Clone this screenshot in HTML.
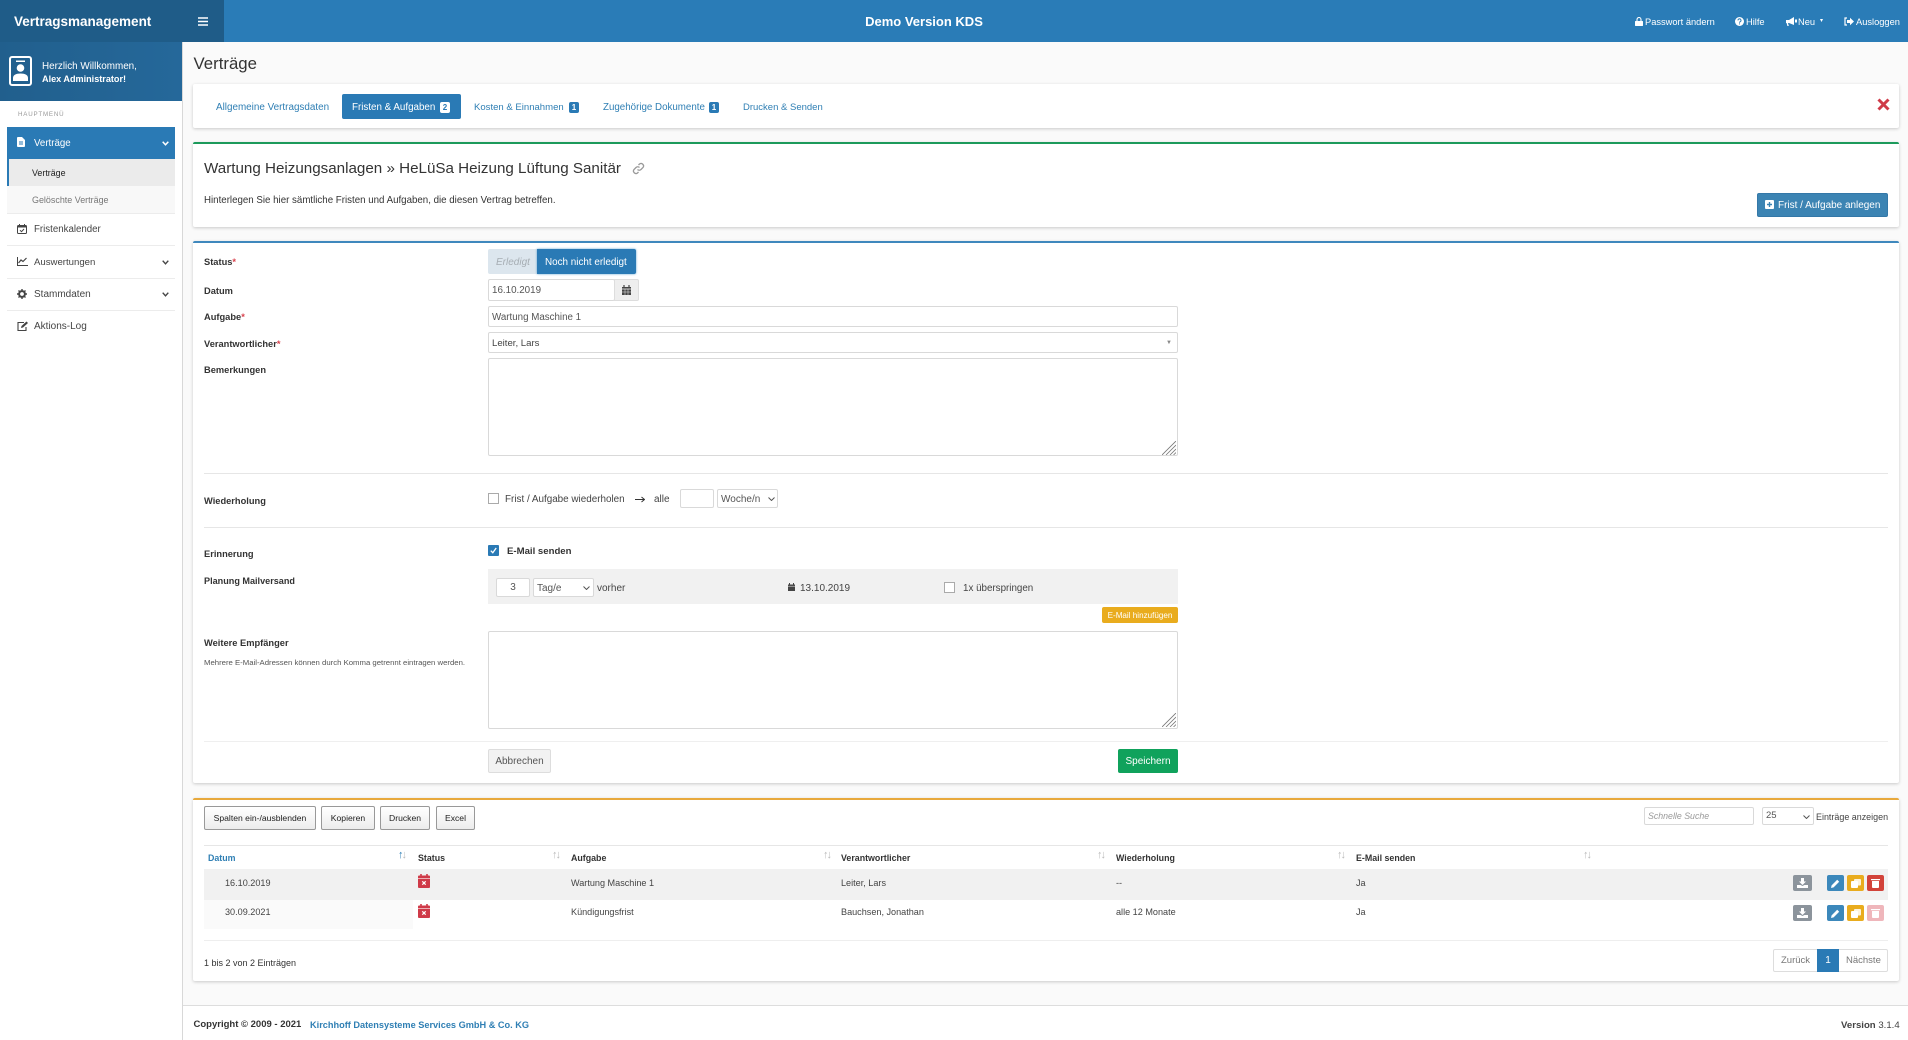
<!DOCTYPE html>
<html lang="de"><head><meta charset="utf-8"><title>Vertragsmanagement</title>
<style>
*{box-sizing:border-box}
html{background:#fafafa}
html,body{margin:0;padding:0;width:1908px;height:1040px;overflow:hidden;font-family:"Liberation Sans",sans-serif;color:#333}
body{background:#fafafa;filter:blur(.3px)}
.a{position:absolute}
.t{position:absolute;white-space:nowrap;line-height:16px;height:16px;font-size:10px;margin-top:1px}
.n{margin-top:0}
.b{font-weight:bold}
.card{position:absolute;left:193px;width:1706px;background:#fff;border-radius:2px;box-shadow:0 1px 3px rgba(0,0,0,.2)}
.lbl{left:204px;font-weight:bold;color:#333;font-size:9.3px;margin-top:0}
.req{color:#d9434e}
.inp{position:absolute;background:#fff;border:1px solid #d9d9d9;border-radius:2px}
.hr{position:absolute;left:204px;width:1684px;height:1px;background:#e6e6e6}
.mi{left:34px;font-size:9.8px;color:#444}
.sep{position:absolute;left:7px;width:168px;height:1px;background:#ececec}
.dtb{position:absolute;top:806px;height:24px;background:linear-gradient(#fff,#ececec);border:1px solid #999;border-radius:2px;font-size:8.6px;line-height:23px;text-align:center;color:#222}
.th{top:850px;font-weight:bold;font-size:8.85px;color:#333;margin-top:0}
.td{font-size:9.1px;color:#444;margin-top:0}
.ib{position:absolute;width:17px;height:16px;border-radius:2px}
.cb{position:absolute;width:11px;height:11px;background:#fff;border:1px solid #aaa}
svg{position:absolute;display:block}
.so{position:absolute;top:850px;font-size:11px;color:#bbb;line-height:10px;letter-spacing:-2px}
</style></head><body>

<!-- header -->
<div class="a" style="left:0;top:0;width:1908px;height:42px;background:#2a7cb7"></div>
<div class="a" style="left:0;top:0;width:224px;height:42px;background:#1f5c88"></div>
<div class="t b" style="left:14px;top:13px;font-size:13.5px;color:#fff">Vertragsmanagement</div>
<svg style="left:198px;top:17px" width="10" height="9" viewBox="0 0 10 9"><path d="M0 1h10M0 4.500h10M0 8h10" stroke="#fff" stroke-width="1.600"/></svg>
<div class="t b" style="left:824px;width:200px;text-align:center;top:13px;font-size:13px;color:#fff">Demo Version KDS</div>

<svg style="left:1635px;top:17px" width="8" height="9" viewBox="0 0 8 9"><path d="M2 4V2.500a2 2 0 0 1 4 0V4" fill="none" stroke="#fff" stroke-width="1.100"/><rect y="4" width="8" height="5" rx=".6" fill="#fff"/></svg>
<div class="t n" style="left:1645px;top:14px;font-size:9.300px;color:#fff">Passwort ändern</div>
<svg style="left:1735px;top:17px" width="9" height="9" viewBox="0 0 9 9"><circle cx="4.500" cy="4.500" r="4.500" fill="#fff"/><path d="M3 3.400a1.500 1.500 0 1 1 2.300 1.200c-.6.4-.8.6-.8 1.100" fill="none" stroke="#2a7cb7" stroke-width="1"/><rect x="4" y="6.400" width="1" height="1" fill="#2a7cb7"/></svg>
<div class="t n" style="left:1746px;top:14px;font-size:9.300px;color:#fff">Hilfe</div>
<svg style="left:1786px;top:17px" width="11" height="9" viewBox="0 0 11 9"><path d="M0 3h3l5-3v8L3 6H2l.8 3H1.400L.6 6H0z" fill="#fff"/><rect x="9" y="2.500" width="2" height="3" fill="#fff"/></svg>
<div class="t n" style="left:1798px;top:14px;font-size:9.300px;color:#fff">Neu</div>
<div class="t n" style="left:1820px;top:13px;font-size:6px;color:#fff">▾</div>
<svg style="left:1844px;top:17px" width="10" height="9" viewBox="0 0 10 9"><path d="M3 1H1v7h2" fill="none" stroke="#fff" stroke-width="1.200"/><path d="M3 3h3V.8L10 4.500 6 8.200V6H3z" fill="#fff"/></svg>
<div class="t n" style="left:1856px;top:14px;font-size:9.300px;color:#fff">Ausloggen</div>

<!-- sidebar -->
<div class="a" style="left:0;top:42px;width:183px;height:998px;background:#fff;border-right:1px solid #d8d8d8"></div>
<div class="a" style="left:0;top:42px;width:182px;height:59px;background:linear-gradient(90deg,#215f8d,#25689a)"></div>
<svg style="left:9px;top:56px" width="23" height="30" viewBox="0 0 23 30"><rect x="1" y="1" width="21" height="28" rx="2" fill="none" stroke="#fff" stroke-width="2"/><rect x="7" y="4.500" width="9" height="1.500" fill="#fff"/><circle cx="11.500" cy="12" r="3.800" fill="#fff"/><path d="M4 25v-3c0-3 3-4.500 7.500-4.500S19 19 19 22v3z" fill="#fff"/></svg>
<div class="t" style="left:42px;top:58px;font-size:9.900px;color:#fff">Herzlich Willkommen,</div>
<div class="t b" style="left:42px;top:70px;font-size:9.100px;color:#fff">Alex Administrator!</div>
<div class="t" style="left:18px;top:106px;font-size:6.200px;letter-spacing:.8px;color:#999">HAUPTMENÜ</div>

<div class="a" style="left:7px;top:127px;width:168px;height:32px;background:#2a7ab5"></div>
<svg style="left:17px;top:137px" width="8" height="10" viewBox="0 0 8 10"><path d="M0 1a1 1 0 0 1 1-1h4l3 3v6a1 1 0 0 1-1 1H1a1 1 0 0 1-1-1z" fill="#fff"/><path d="M2 5h4M2 7h4" stroke="#2a7ab5" stroke-width=".9"/></svg>
<div class="t mi" style="top:135px;color:#fff;font-size:9.700px">Verträge</div>
<svg style="left:162px;top:141px" width="7" height="5" viewBox="0 0 7 5"><path d="M.7.700 3.500 3.800 6.300.700" fill="none" stroke="#fff" stroke-width="1.500"/></svg>
<div class="a" style="left:7px;top:159px;width:168px;height:27px;background:#ebebeb;border-left:2px solid #2a7ab5"></div>
<div class="t" style="left:32px;top:164px;font-size:8.900px;color:#222">Verträge</div>
<div class="a" style="left:7px;top:186px;width:168px;height:27px;background:#f8f8f8"></div>
<div class="t" style="left:32px;top:191px;font-size:8.950px;color:#777">Gelöschte Verträge</div>
<div class="sep" style="top:213px"></div>
<svg style="left:17px;top:224px" width="10" height="10" viewBox="0 0 10 10"><rect x=".5" y="1.500" width="9" height="8" rx="1" fill="none" stroke="#444"/><rect x=".5" y="1.500" width="9" height="2" fill="#444"/><path d="M2.500 0v2M7.500 0v2" stroke="#444"/><path d="M3 6.200 4.500 7.700 7 5" fill="none" stroke="#444"/></svg>
<div class="t mi" style="top:221px;font-size:9.700px">Fristenkalender</div>
<div class="sep" style="top:245px"></div>
<svg style="left:17px;top:257px" width="11" height="9" viewBox="0 0 11 9"><path d="M.5 0v8.500H11" fill="none" stroke="#444"/><path d="M1.500 6 4 3l2 1.500L9.500 1" fill="none" stroke="#444" stroke-width="1.200"/></svg>
<div class="t mi" style="top:254px;font-size:9.600px">Auswertungen</div>
<svg style="left:162px;top:260px" width="7" height="5" viewBox="0 0 7 5"><path d="M.7.700 3.500 3.800 6.300.700" fill="none" stroke="#444" stroke-width="1.400"/></svg>
<div class="sep" style="top:278px"></div>
<svg style="left:17px;top:289px" width="10" height="10" viewBox="0 0 10 10"><circle cx="5" cy="5" r="2.900" fill="none" stroke="#444" stroke-width="2"/><path d="M5 0v10M0 5h10M1.500 1.500l7 7M8.500 1.500l-7 7" stroke="#444" stroke-width="1.400" stroke-dasharray="1.600 6.800"/></svg>
<div class="t mi" style="top:286px;font-size:10px">Stammdaten</div>
<svg style="left:162px;top:292px" width="7" height="5" viewBox="0 0 7 5"><path d="M.7.700 3.500 3.800 6.300.700" fill="none" stroke="#444" stroke-width="1.400"/></svg>
<div class="sep" style="top:310px"></div>
<svg style="left:17px;top:321px" width="12" height="10" viewBox="0 0 12 10"><path d="M7 1.500H1v8h8V6" fill="none" stroke="#444" stroke-width="1.100"/><path d="M4 7l.5-2L9.500.5l1.500 1.500L6 6.500z" fill="#444"/></svg>
<div class="t mi" style="top:318px;font-size:10px">Aktions-Log</div>

<!-- main title -->
<div class="t" style="left:193.500px;top:55px;font-size:16.800px;color:#333">Verträge</div>

<!-- tabs -->
<div class="card" style="top:84px;height:44px"></div>
<div class="t" style="left:216px;top:99px;font-size:9.900px;color:#2f7fb4">Allgemeine Vertragsdaten</div>
<div class="a" style="left:342px;top:94px;width:119px;height:25px;background:#2a7ab5;border-radius:2px"></div>
<div class="t" style="left:352px;top:99px;font-size:9.800px;color:#fff">Fristen &amp; Aufgaben</div>
<div class="a" style="left:440px;top:102px;width:10px;height:11px;background:#fff;border-radius:2px;color:#2a7ab5;font-size:8px;line-height:11px;text-align:center;font-weight:bold">2</div>
<div class="t" style="left:474px;top:99px;font-size:9.550px;color:#2f7fb4">Kosten &amp; Einnahmen</div>
<div class="a" style="left:569px;top:102px;width:10px;height:11px;background:#2a7ab5;border-radius:2px;color:#fff;font-size:8px;line-height:11px;text-align:center;font-weight:bold">1</div>
<div class="t" style="left:603px;top:99px;font-size:9.750px;color:#2f7fb4">Zugehörige Dokumente</div>
<div class="a" style="left:709px;top:102px;width:10px;height:11px;background:#2a7ab5;border-radius:2px;color:#fff;font-size:8px;line-height:11px;text-align:center;font-weight:bold">1</div>
<div class="t" style="left:743px;top:99px;font-size:9.500px;color:#2f7fb4">Drucken &amp; Senden</div>
<svg style="left:1877px;top:98px" width="13" height="13" viewBox="0 0 13 13"><path d="M1.500 1.500l10 10M11.500 1.500l-10 10" stroke="#cf3a48" stroke-width="3"/></svg>

<!-- title card -->
<div class="card" style="top:142px;height:85px;border-top:2px solid #1c9a5b"></div>
<div class="t" style="left:204px;top:160px;font-size:15.180px;color:#333">Wartung Heizungsanlagen » HeLüSa Heizung Lüftung Sanitär</div>
<svg style="left:632px;top:162px" width="13" height="13" viewBox="0 0 13 13"><path d="M5.500 7.500a2.500 2.500 0 0 0 3.500 0l2-2a2.500 2.500 0 0 0-3.500-3.500L6.500 3M7.500 5.500a2.500 2.500 0 0 0-3.500 0l-2 2a2.500 2.500 0 0 0 3.500 3.500L6.500 10" fill="none" stroke="#999" stroke-width="1.300"/></svg>
<div class="t" style="left:204px;top:192px;font-size:9.730px;color:#333">Hinterlegen Sie hier sämtliche Fristen und Aufgaben, die diesen Vertrag betreffen.</div>
<div class="a" style="left:1757px;top:193px;width:131px;height:24px;background:#3c84b3;border-radius:2px;border:1px solid #3478a8"></div>
<svg style="left:1765px;top:200px" width="9" height="9" viewBox="0 0 9 9"><rect width="9" height="9" rx="1" fill="#fff"/><path d="M4.500 2v5M2 4.500h5" stroke="#3c84b3" stroke-width="1.400"/></svg>
<div class="t" style="left:1778px;top:197px;font-size:9.960px;color:#fff">Frist / Aufgabe anlegen</div>

<!-- form card -->
<div class="card" style="top:241px;height:542px;border-top:2px solid #3f88bd"></div>
<div class="t lbl" style="top:254px">Status<span class="req">*</span></div>
<div class="a" style="left:488px;top:249px;width:49px;height:25px;background:#dce6ee;border-radius:2px 0 0 2px"></div>
<div class="t" style="left:496px;top:254px;font-style:italic;font-size:10px;color:#a6adb3">Erledigt</div>
<div class="a" style="left:537px;top:249px;width:99px;height:25px;background:#2a7ab5;border-radius:0 2px 2px 0;box-shadow:0 0 2px #5aa0d0"></div>
<div class="t" style="left:545px;top:254px;font-size:9.900px;color:#fff">Noch nicht erledigt</div>

<div class="t lbl" style="top:283px">Datum</div>
<div class="inp" style="left:488px;top:279px;width:127px;height:22px"></div>
<div class="t" style="left:492px;top:282px;font-size:9.800px;color:#555">16.10.2019</div>
<div class="a" style="left:614px;top:279px;width:25px;height:22px;background:#eee;border:1px solid #ddd;border-radius:0 2px 2px 0"></div>
<svg style="left:622px;top:285px" width="9" height="10" viewBox="0 0 9 10"><path d="M0 2h9v8H0z" fill="#444"/><path d="M2 0v2M7 0v2" stroke="#444" stroke-width="1.200"/><path d="M0 4h9" stroke="#eee" stroke-width=".8"/><path d="M3 4v6M6 4v6M0 7h9" stroke="#eee" stroke-width=".5"/></svg>

<div class="t lbl" style="top:309px">Aufgabe<span class="req">*</span></div>
<div class="inp" style="left:488px;top:306px;width:690px;height:21px"></div>
<div class="t" style="left:492px;top:309px;font-size:9.750px;color:#555">Wartung Maschine 1</div>

<div class="t lbl" style="top:336px">Verantwortlicher<span class="req">*</span></div>
<div class="inp" style="left:488px;top:332px;width:690px;height:21px"></div>
<div class="t" style="left:492px;top:335px;font-size:9.600px;color:#444">Leiter, Lars</div>
<div class="t" style="left:1166px;top:334px;font-size:6px;color:#888">▼</div>

<div class="t lbl" style="top:362px">Bemerkungen</div>
<div class="inp" style="left:488px;top:358px;width:690px;height:98px"></div>
<svg style="left:1162px;top:441px" width="14" height="14" viewBox="0 0 14 14"><path d="M14 0 0 14M14 4 4 14M14 8 8 14M14 11.500 11.500 14" stroke="#777" stroke-width=".8"/></svg>

<div class="hr" style="top:473px"></div>
<div class="t lbl" style="top:493px">Wiederholung</div>
<div class="cb" style="left:488px;top:493px"></div>
<div class="t" style="left:505px;top:491px;font-size:9.900px;color:#444">Frist / Aufgabe wiederholen</div>
<svg style="left:635px;top:496px" width="10" height="7" viewBox="0 0 10 7"><path d="M0 3.500h9M6.500 1 9.500 3.500 6.500 6" fill="none" stroke="#333" stroke-width="1"/></svg>
<div class="t" style="left:654px;top:491px;font-size:10px;color:#444">alle</div>
<div class="inp" style="left:680px;top:489px;width:34px;height:19px"></div>
<div class="inp" style="left:717px;top:489px;width:61px;height:19px"></div>
<div class="t" style="left:721px;top:491px;font-size:10px;color:#555">Woche/n</div>
<svg style="left:768px;top:497px" width="7" height="4" viewBox="0 0 7 4"><path d="M.5.500 3.500 3.500 6.500.500" fill="none" stroke="#555"/></svg>

<div class="hr" style="top:527px"></div>
<div class="t lbl" style="top:546px">Erinnerung</div>
<div class="a" style="left:488px;top:545px;width:11px;height:11px;background:#2a7ab5;border-radius:1px"></div>
<svg style="left:490px;top:547px" width="7" height="7" viewBox="0 0 7 7"><path d="M.8 3.700 2.800 5.700 6.200 1" fill="none" stroke="#fff" stroke-width="1.300"/></svg>
<div class="t b" style="left:507px;top:543px;font-size:9.600px;color:#333">E-Mail senden</div>

<div class="t lbl" style="top:573px;font-size:9.100px">Planung Mailversand</div>
<div class="a" style="left:488px;top:569px;width:690px;height:35px;background:#f1f1f1"></div>
<div class="inp" style="left:496px;top:578px;width:34px;height:19px;text-align:center;font-size:10px;line-height:18px;color:#555">3</div>
<div class="inp" style="left:533px;top:578px;width:61px;height:19px"></div>
<div class="t" style="left:537px;top:580px;font-size:10px;color:#555">Tag/e</div>
<svg style="left:583px;top:586px" width="7" height="4" viewBox="0 0 7 4"><path d="M.5.500 3.500 3.500 6.500.500" fill="none" stroke="#555"/></svg>
<div class="t" style="left:597px;top:580px;font-size:10px;color:#444">vorher</div>
<svg style="left:788px;top:583px" width="7" height="8" viewBox="0 0 7 8"><path d="M0 1.500h7V8H0z" fill="#444"/><path d="M1.500 0v1.500M5.500 0v1.500" stroke="#444"/><path d="M0 3.200h7" stroke="#f1f1f1" stroke-width=".5"/></svg>
<div class="t" style="left:800px;top:580px;font-size:10px;color:#444">13.10.2019</div>
<div class="cb" style="left:944px;top:582px"></div>
<div class="t" style="left:963px;top:580px;font-size:9.800px;color:#444">1x überspringen</div>
<div class="a" style="left:1102px;top:607px;width:76px;height:16px;background:#e9ac1e;border-radius:2px;color:#fff;font-size:8.100px;line-height:17px;text-align:center">E-Mail hinzufügen</div>

<div class="t lbl" style="top:635px">Weitere Empfänger</div>
<div class="t" style="left:204px;top:654px;font-size:7.750px;color:#555">Mehrere E-Mail-Adressen können durch Komma getrennt eintragen werden.</div>
<div class="inp" style="left:488px;top:631px;width:690px;height:98px"></div>
<svg style="left:1162px;top:713px" width="14" height="14" viewBox="0 0 14 14"><path d="M14 0 0 14M14 4 4 14M14 8 8 14M14 11.500 11.500 14" stroke="#777" stroke-width=".8"/></svg>

<div class="hr" style="top:741px;background:#efefef"></div>
<div class="a" style="left:488px;top:749px;width:63px;height:24px;background:#f2f2f2;border:1px solid #ddd;border-radius:2px;color:#555;font-size:10px;line-height:23px;text-align:center">Abbrechen</div>
<div class="a" style="left:1118px;top:749px;width:60px;height:24px;background:#10a25c;border-radius:2px;color:#fff;font-size:10px;line-height:25px;text-align:center">Speichern</div>

<!-- table card -->
<div class="card" style="top:798px;height:183px;border-top:2px solid #e8a93c"></div>
<div class="dtb" style="left:204px;width:112px">Spalten ein-/ausblenden</div>
<div class="dtb" style="left:321px;width:54px">Kopieren</div>
<div class="dtb" style="left:380px;width:50px">Drucken</div>
<div class="dtb" style="left:436px;width:39px">Excel</div>
<div class="inp" style="left:1644px;top:807px;width:110px;height:18px"></div>
<div class="t" style="left:1648px;top:807px;font-size:8.800px;font-style:italic;color:#999">Schnelle Suche</div>
<div class="inp" style="left:1762px;top:807px;width:52px;height:18px"></div>
<div class="t" style="left:1766px;top:807px;font-size:9.500px;color:#555">25</div>
<svg style="left:1803px;top:815px" width="7" height="4" viewBox="0 0 7 4"><path d="M.5.500 3.500 3.500 6.500.500" fill="none" stroke="#555"/></svg>
<div class="t" style="left:1816px;top:808px;font-size:8.950px;color:#444">Einträge anzeigen</div>

<div class="hr" style="top:845px"></div>
<div class="t th" style="left:208px;color:#2f7fb4">Datum</div>
<div class="t th" style="left:418px">Status</div>
<div class="t th" style="left:571px">Aufgabe</div>
<div class="t th" style="left:841px">Verantwortlicher</div>
<div class="t th" style="left:1116px">Wiederholung</div>
<div class="t th" style="left:1356px">E-Mail senden</div>
<div class="so" style="left:398px;color:#2f7fb4">↑<span style="color:#bbb">↓</span></div>
<div class="so" style="left:552px">↑↓</div>
<div class="so" style="left:823px">↑↓</div>
<div class="so" style="left:1097px">↑↓</div>
<div class="so" style="left:1337px">↑↓</div>
<div class="so" style="left:1583px">↑↓</div>

<div class="a" style="left:204px;top:869px;width:1684px;height:31px;background:#f1f1f1"></div>
<div class="a" style="left:204px;top:900px;width:209px;height:29px;background:#fafafa"></div>

<div class="t td" style="left:225px;top:875px">16.10.2019</div>
<div class="t td" style="left:571px;top:875px">Wartung Maschine 1</div>
<div class="t td" style="left:841px;top:875px">Leiter, Lars</div>
<div class="t td" style="left:1116px;top:875px">--</div>
<div class="t td" style="left:1356px;top:875px">Ja</div>

<div class="t td" style="left:225px;top:904px">30.09.2021</div>
<div class="t td" style="left:571px;top:904px">Kündigungsfrist</div>
<div class="t td" style="left:841px;top:904px">Bauchsen, Jonathan</div>
<div class="t td" style="left:1116px;top:904px">alle 12 Monate</div>
<div class="t td" style="left:1356px;top:904px">Ja</div>

<svg style="left:418px;top:874px" width="12" height="14" viewBox="0 0 12 14"><path d="M0 2.500a1 1 0 0 1 1-1h10a1 1 0 0 1 1 1V13a1 1 0 0 1-1 1H1a1 1 0 0 1-1-1z" fill="#cf3a48"/><path d="M3 0v2.500M9 0v2.500" stroke="#cf3a48" stroke-width="1.600"/><path d="M0 4.500h12" stroke="#fff" stroke-width=".6"/><path d="M4.300 7.300l3.400 3.400M7.700 7.300l-3.400 3.400" stroke="#fff" stroke-width="1.200"/></svg>
<svg style="left:418px;top:904px" width="12" height="14" viewBox="0 0 12 14"><path d="M0 2.500a1 1 0 0 1 1-1h10a1 1 0 0 1 1 1V13a1 1 0 0 1-1 1H1a1 1 0 0 1-1-1z" fill="#cf3a48"/><path d="M3 0v2.500M9 0v2.500" stroke="#cf3a48" stroke-width="1.600"/><path d="M0 4.500h12" stroke="#fff" stroke-width=".6"/><path d="M4.300 7.300l3.400 3.400M7.700 7.300l-3.400 3.400" stroke="#fff" stroke-width="1.200"/></svg>

<!-- row actions -->
<div class="ib" style="left:1793px;top:875px;width:19px;background:#8c949c"></div>
<svg style="left:1797px;top:878px" width="11" height="10" viewBox="0 0 11 10"><path d="M4 0h3v3.500h2L5.500 7 2 3.500h2z" fill="#fff"/><path d="M0 7h3.500l2 1 2-1H11v3H0z" fill="#fff"/></svg>
<div class="ib" style="left:1827px;top:875px;background:#3c88bb"></div>
<svg style="left:1831px;top:879px" width="9" height="9" viewBox="0 0 9 9"><path d="M0 9l.6-2.600L6.200.8l2 2L2.600 8.400z" fill="#fff"/></svg>
<div class="ib" style="left:1847px;top:875px;background:#e9ac1e"></div>
<svg style="left:1851px;top:879px" width="10" height="9" viewBox="0 0 10 9"><rect x="3" y="0" width="7" height="6.500" rx="1" fill="#fff" opacity=".85"/><rect x="0" y="2" width="7" height="7" rx="1" fill="#fff"/></svg>
<div class="ib" style="left:1867px;top:875px;background:#d2433a"></div>
<svg style="left:1871px;top:878px" width="9" height="10" viewBox="0 0 9 10"><path d="M0 1h9v1.200H0z" fill="#fff"/><path d="M1 3h7v6a1 1 0 0 1-1 1H2a1 1 0 0 1-1-1z" fill="#fff"/></svg>

<div class="ib" style="left:1793px;top:905px;width:19px;background:#8c949c"></div>
<svg style="left:1797px;top:908px" width="11" height="10" viewBox="0 0 11 10"><path d="M4 0h3v3.500h2L5.500 7 2 3.500h2z" fill="#fff"/><path d="M0 7h3.500l2 1 2-1H11v3H0z" fill="#fff"/></svg>
<div class="ib" style="left:1827px;top:905px;background:#3c88bb"></div>
<svg style="left:1831px;top:909px" width="9" height="9" viewBox="0 0 9 9"><path d="M0 9l.6-2.600L6.200.8l2 2L2.600 8.400z" fill="#fff"/></svg>
<div class="ib" style="left:1847px;top:905px;background:#e9ac1e"></div>
<svg style="left:1851px;top:909px" width="10" height="9" viewBox="0 0 10 9"><rect x="3" y="0" width="7" height="6.500" rx="1" fill="#fff" opacity=".85"/><rect x="0" y="2" width="7" height="7" rx="1" fill="#fff"/></svg>
<div class="ib" style="left:1867px;top:905px;background:#efb6bb"></div>
<svg style="left:1871px;top:908px" width="9" height="10" viewBox="0 0 9 10"><path d="M0 1h9v1.200H0z" fill="#fff"/><path d="M1 3h7v6a1 1 0 0 1-1 1H2a1 1 0 0 1-1-1z" fill="#fff"/></svg>

<div class="hr" style="top:940px;background:#eee"></div>
<div class="t" style="left:204px;top:954px;font-size:9px;color:#333">1 bis 2 von 2 Einträgen</div>
<div class="a" style="left:1773px;top:949px;width:115px;height:23px;background:#fff;border:1px solid #ddd;border-radius:2px"></div>
<div class="t" style="left:1781px;top:952px;font-size:9.500px;color:#777">Zurück</div>
<div class="a" style="left:1817px;top:949px;width:22px;height:23px;background:#2a7ab5;color:#fff;font-size:10px;line-height:23px;text-align:center">1</div>
<div class="t" style="left:1846px;top:952px;font-size:9.500px;color:#777">Nächste</div>

<!-- footer -->
<div class="a" style="left:183px;top:1005px;width:1725px;height:35px;background:#fff;border-top:1px solid #ddd"></div>
<div class="t b" style="left:193.500px;top:1016px;font-size:9.500px;color:#333">Copyright © 2009 - 2021</div>
<div class="t b" style="left:310px;top:1016px;font-size:9.200px;color:#2f7fb4">Kirchhoff Datensysteme Services GmbH &amp; Co. KG</div>
<div class="t" style="left:1841px;top:1017px;font-size:9.600px;color:#444"><b>Version</b> 3.1.4</div>

</body></html>
